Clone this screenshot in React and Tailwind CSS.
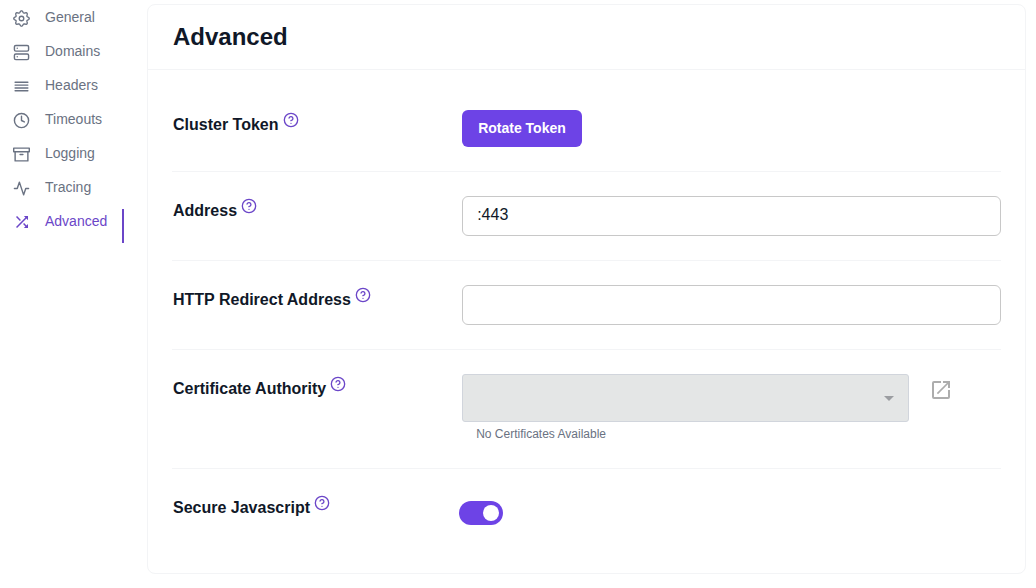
import React from "react";
import {
  FiActivity,
  FiAlignJustify,
  FiArchive,
  FiClock,
  FiHelpCircle,
  FiServer,
} from "react-icons/fi";
import { MdArrowDropDown, MdShuffle } from "react-icons/md";

// Outline of a gear with eight soft teeth, centred in a 24-unit box.
const GEAR_POINTS = Array.from({ length: 96 }, (_, i) => {
  const angle = (i / 96) * Math.PI * 2;
  const radius = 9.6 + 1.3 * Math.cos(8 * angle);
  const x = 12 + radius * Math.sin(angle);
  const y = 12 - radius * Math.cos(angle);
  return x.toFixed(2) + "," + y.toFixed(2);
}).join(" ");

function GearIcon({ className }) {
  return (
    <svg
      viewBox="0 0 24 24"
      fill="none"
      stroke="currentColor"
      strokeWidth="1.9"
      strokeLinejoin="round"
      className={className}
      aria-hidden="true"
    >
      <polygon points={GEAR_POINTS} />
      <circle cx="12" cy="12" r="3.2" />
    </svg>
  );
}

function OpenIcon({ className }) {
  return (
    <svg
      viewBox="0 0 24 24"
      fill="none"
      stroke="currentColor"
      strokeWidth="2"
      className={className}
      aria-hidden="true"
    >
      <path d="M12 4H5a1 1 0 0 0-1 1v14a1 1 0 0 0 1 1h14a1 1 0 0 0 1-1v-7" />
      <path d="M14 4h6v6" />
      <path strokeWidth="1.7" d="M8.4 15.6 20 4" />
    </svg>
  );
}

const NAV = [
  { label: "General", Icon: GearIcon },
  { label: "Domains", Icon: FiServer },
  { label: "Headers", Icon: FiAlignJustify },
  { label: "Timeouts", Icon: FiClock },
  { label: "Logging", Icon: FiArchive },
  { label: "Tracing", Icon: FiActivity },
  { label: "Advanced", Icon: MdShuffle, active: true },
];

function Row({ label, htmlFor, last, children }) {
  return (
    <div
      className={
        "grid grid-cols-[35%_1fr] items-start py-6 " +
        (last ? "" : "border-b border-gray-100")
      }
    >
      <div className="flex items-start gap-1 pl-px">
        <label
          htmlFor={htmlFor}
          className="text-base leading-[30px] font-bold text-gray-900"
        >
          {label}
        </label>
        <button type="button" aria-label={"Help: " + label} className="mt-0.5">
          <FiHelpCircle className="size-4 text-[#6b46c8]" />
        </button>
      </div>
      <div className="min-w-0">{children}</div>
    </div>
  );
}

const inputClass =
  "block h-10 w-full rounded-md border border-[#c8c8c8] bg-white px-3.5 pb-0.5 text-base text-gray-900 outline-none";

export default function App() {
  return (
    <div className="flex min-h-screen bg-white font-['Liberation_Sans',Arial,sans-serif]">
      <nav className="w-31 shrink-0 pt-[5px]" aria-label="Settings">
        <ul>
          {NAV.map(({ label, Icon, active }) => (
            <li key={label}>
              <a
                href={"#" + label.toLowerCase()}
                aria-current={active ? "page" : undefined}
                className={
                  "flex h-[34px] items-start gap-3.5 border-r-2 pl-3 text-sm leading-6 " +
                  (active
                    ? "border-[#6b46c8] text-[#6b46c8]"
                    : "border-transparent text-gray-500")
                }
              >
                <span className="flex h-[26px] w-[19px] shrink-0 items-center justify-center">
                  <Icon
                    className={
                      active ? "size-[18px] shrink-0" : "size-[17px] shrink-0"
                    }
                  />
                </span>
                {label}
              </a>
            </li>
          ))}
        </ul>
      </nav>

      <main className="min-w-0 grow pt-1 pr-2.5 pb-3.5 pl-[23px]">
        <section className="h-full rounded-lg border border-gray-100 bg-white">
          <header className="border-b border-gray-100 px-[25px] py-4">
            <h1 className="text-2xl leading-8 font-bold text-gray-900">
              Advanced
            </h1>
          </header>
          <div className="px-6 pt-4">
            <Row label="Cluster Token" htmlFor="rotate">
              <button
                id="rotate"
                type="button"
                className="h-[37px] rounded-md bg-[#6d43e6] px-4 pb-0.5 text-sm font-bold text-white"
              >
                Rotate Token
              </button>
            </Row>
            <Row label="Address" htmlFor="address">
              <input
                id="address"
                type="text"
                defaultValue=":443"
                className={inputClass}
              />
            </Row>
            <Row label="HTTP Redirect Address" htmlFor="redirect">
              <input id="redirect" type="text" className={inputClass} />
            </Row>
            <Row label="Certificate Authority" htmlFor="authority">
              <div className="flex items-start">
                <div className="min-w-0 grow">
                  <div className="relative">
                    <select
                      id="authority"
                      disabled
                      className="block h-12 w-full appearance-none rounded-[3px] border border-gray-300 bg-[#e4e6e6] px-3.5"
                    >
                      <option value=""></option>
                    </select>
                    <MdArrowDropDown className="pointer-events-none absolute top-3 right-2 size-6 text-[#9b9da1]" />
                  </div>
                  <p className="mt-0.5 pl-3.5 text-xs leading-5 text-gray-500">
                    No Certificates Available
                  </p>
                </div>
                <a
                  href="#certificates"
                  aria-label="Open certificates"
                  className="mt-1 w-23 shrink-0 pl-5"
                >
                  <OpenIcon className="size-6 text-[#adadad]" />
                </a>
              </div>
            </Row>
            <Row label="Secure Javascript" htmlFor="secure" last>
              <input
                id="secure"
                type="checkbox"
                role="switch"
                defaultChecked
                className="mt-2 -ml-[3px] block h-6 w-11 appearance-none rounded-full bg-gray-300 p-1 before:block before:size-4 before:rounded-full before:bg-white checked:bg-[#6d43e6] checked:before:ml-auto"
              />
            </Row>
          </div>
        </section>
      </main>
    </div>
  );
}
